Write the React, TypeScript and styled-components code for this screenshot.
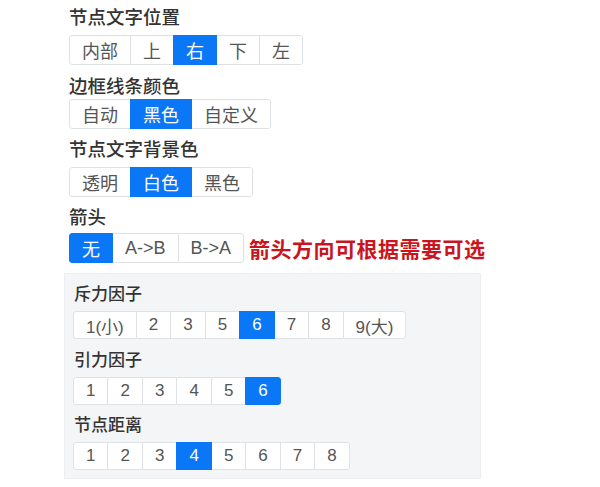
import { useState } from "react";
import styled, { createGlobalStyle } from "styled-components";

const GlobalStyle = createGlobalStyle`
    body {
        margin: 0;
        background: #ffffff;
        font-family: "Liberation Sans", "Noto Sans CJK SC", sans-serif;
    }
`

const StyledPage = styled.div`
    padding: 6px 0 0 64px;
    width: 600px;
    box-sizing: border-box;
`

const StyledTop = styled.div`
    padding-left: 5px;
`

const StyledLabel = styled.div<{ $small?: boolean; $gap?: number }>`
    font-size: ${(p) => (p.$small ? "17px" : "18.5px")};
    line-height: 24px;
    height: 24px;
    color: #333;
    font-weight: 500;
    margin: 0 0 ${(p) => p.$gap ?? 5}px ${(p) => (p.$small ? "1px" : "0")};
`

const StyledRow = styled.div`
    display: flex;
    align-items: center;
    margin-bottom: 9.5px;
    &:last-child {
        margin-bottom: 0;
    }
`

const StyledGroup = styled.div`
    display: inline-flex;
`

const StyledButton = styled.button<{ $active: boolean; $small?: boolean }>`
    position: relative;
    height: ${(p) => (p.$small ? "28px" : "30px")};
    padding: 0 12px;
    margin-left: -1px;
    font-family: "Liberation Sans", "Noto Sans CJK SC", sans-serif;
    font-size: ${(p) => (p.$small ? "17px" : "18px")};
    color: ${(p) => (p.$active ? "#ffffff" : "#555")};
    background: ${(p) => (p.$active ? "#0a78f6" : "#ffffff")};
    border: 1px solid ${(p) => (p.$active ? "#0a78f6" : "#dfe2e5")};
    z-index: ${(p) => (p.$active ? 1 : 0)};
    border-radius: 0;
    cursor: pointer;
    &:first-child {
        margin-left: 0;
        border-radius: 3px 0 0 3px;
    }
    &:last-child {
        border-radius: 0 3px 3px 0;
    }
`

const StyledNote = styled.span`
    margin-left: 5px;
    font-size: 21px;
    font-weight: 700;
    color: #c9161e;
    letter-spacing: 0.5px;
`

const StyledPanel = styled.div`
    width: 417px;
    box-sizing: border-box;
    margin-top: 10px;
    padding: 9px 8px 8px 8px;
    background: #f4f5f6;
    border: 1px solid #eceeef;
`

type GroupProps = {
    options: string[];
    initial: number;
    small?: boolean;
};

const ButtonGroup = ({ options, initial, small }: GroupProps) => {
    const [selected, setSelected] = useState(initial);
    return (
        <StyledGroup>
            {options.map((o, i) => (
                <StyledButton
                    key={o}
                    $active={i === selected}
                    $small={small}
                    onClick={() => setSelected(i)}
                >
                    {o}
                </StyledButton>
            ))}
        </StyledGroup>
    )
}

const App = () => {
    return (
        <>
            <GlobalStyle />
            <StyledPage>
                <StyledTop>
                    <StyledLabel>节点文字位置</StyledLabel>
                    <StyledRow>
                        <ButtonGroup options={["内部", "上", "右", "下", "左"]} initial={2} />
                    </StyledRow>
                    <StyledLabel $gap={0}>边框线条颜色</StyledLabel>
                    <StyledRow>
                        <ButtonGroup options={["自动", "黑色", "自定义"]} initial={1} />
                    </StyledRow>
                    <StyledLabel $gap={4.5}>节点文字背景色</StyledLabel>
                    <StyledRow>
                        <ButtonGroup options={["透明", "白色", "黑色"]} initial={1} />
                    </StyledRow>
                    <StyledLabel $gap={3}>箭头</StyledLabel>
                    <StyledRow>
                        <ButtonGroup options={["无", "A->B", "B->A"]} initial={0} />
                        <StyledNote>箭头方向可根据需要可选</StyledNote>
                    </StyledRow>
                </StyledTop>
                <StyledPanel>
                    <StyledLabel $small $gap={4}>斥力因子</StyledLabel>
                    <StyledRow>
                        <ButtonGroup small options={["1(小)", "2", "3", "5", "6", "7", "8", "9(大)"]} initial={4} />
                    </StyledRow>
                    <StyledLabel $small $gap={4}>引力因子</StyledLabel>
                    <StyledRow>
                        <ButtonGroup small options={["1", "2", "3", "4", "5", "6"]} initial={5} />
                    </StyledRow>
                    <StyledLabel $small $gap={4}>节点距离</StyledLabel>
                    <StyledRow>
                        <ButtonGroup small options={["1", "2", "3", "4", "5", "6", "7", "8"]} initial={3} />
                    </StyledRow>
                </StyledPanel>
            </StyledPage>
        </>
    )
}

export default App;
